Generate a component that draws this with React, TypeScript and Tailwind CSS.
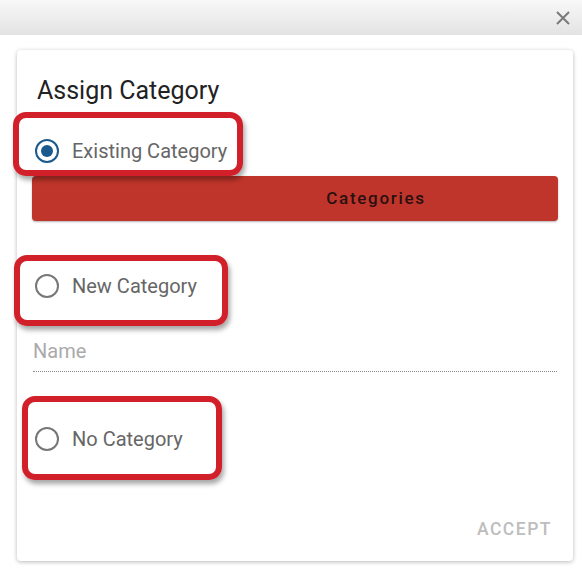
const Radio = ({ checked }: { checked?: boolean }) => (
  <span
    className={`flex h-[24px] w-[24px] shrink-0 items-center justify-center rounded-full border-[2.5px] ${
      checked ? "border-[#1b5a8c]" : "border-[#777777]"
    }`}
  >
    {checked && <span className="h-[12px] w-[12px] rounded-full bg-[#1b5a8c]" />}
  </span>
)

const Mark = ({ className }: { className: string }) => (
  <div
    className={`pointer-events-none absolute rounded-[13px] border-[6px] border-[#d1202a] shadow-[2px_4px_5px_rgba(0,0,0,0.35)] ${className}`}
  />
)

const App = () => {
  return (
    <div className="h-[573px] w-[582px] bg-white font-['Roboto',sans-serif]">
      <div className="flex h-[35px] items-center justify-end bg-gradient-to-b from-[#f8f8f8] to-[#e3e3e3] pr-[11px]">
        <svg width="16" height="16" viewBox="0 0 16 16">
          <path d="M2 2 L14 14 M14 2 L2 14" stroke="#7a7a7a" strokeWidth="2" />
        </svg>
      </div>

      <div className="ml-[17px] mt-[15px] flex h-[511px] w-[556px] flex-col rounded-[4px] bg-white px-[15px] shadow-[0_1px_4px_rgba(0,0,0,0.28)]">
        <h2 className="pl-[5px] pt-[26px] text-[25px] leading-[30px] text-[#222222]">Assign Category</h2>

        <div className="relative mt-[25px] flex h-[40px] items-center gap-[13px] pl-[3px]">
          <Radio checked />
          <span className="text-[20px] text-[#666666]">Existing Category</span>
          <Mark className="-left-[19px] -top-[19px] h-[64px] w-[230px]" />
        </div>

        <button className="mt-[5px] flex h-[45px] w-full items-center justify-center rounded-[4px] bg-[#c0352b] pl-[162px] text-[17px] font-medium tracking-[1.7px] text-[#2a1010] shadow-[0_1px_2px_rgba(0,0,0,0.3)]">
          Categories
        </button>

        <div className="relative mt-[45px] flex h-[40px] items-center gap-[13px] pl-[3px]">
          <Radio />
          <span className="text-[20px] text-[#666666]">New Category</span>
          <Mark className="-left-[18px] -top-[11px] h-[71px] w-[214px]" />
        </div>

        <div className="ml-[1px] mr-[1px] mt-[33px] border-b border-dotted border-[#8a8a8a] pb-[7px]">
          <span className="block text-[20px] leading-[25px] text-[#aaaaaa]">Name</span>
        </div>

        <div className="relative mt-[47px] flex h-[40px] items-center gap-[13px] pl-[3px]">
          <Radio />
          <span className="text-[20px] text-[#666666]">No Category</span>
          <Mark className="-left-[10px] -top-[23px] h-[84px] w-[200px]" />
        </div>

        <div className="mt-[59px] flex justify-end pr-[6px]">
          <span className="text-[17.5px] font-medium leading-[22px] tracking-[1.5px] text-[#bdbdbd]">ACCEPT</span>
        </div>
      </div>
    </div>
  )
}

export default App
